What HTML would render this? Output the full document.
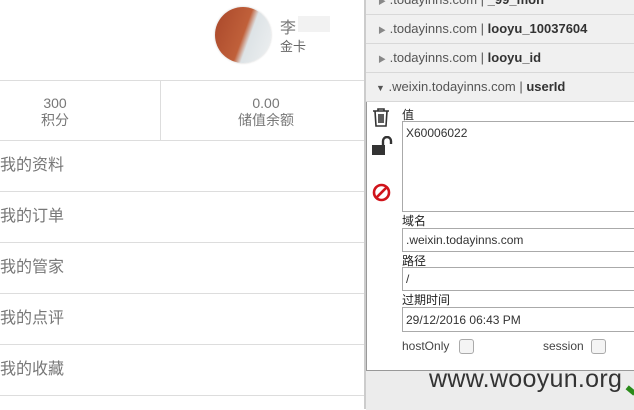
<!DOCTYPE html><html><head><style>
body{margin:0;width:634px;height:409px;overflow:hidden;position:relative;background:#fff;font-family:"Liberation Sans","Noto Sans CJK SC",sans-serif;}
.a{position:absolute}
.row{position:absolute;left:0;width:365px;height:50px;border-bottom:1px solid #ddd;font-size:16px;color:#777;line-height:50px}
.ck{position:absolute;left:366px;width:268px;height:28px;background:#f0f0f0;border-bottom:1px solid #d8d8d8;font-size:13px;color:#555;line-height:28px}
.ck b{color:#333}
.lbl{position:absolute;left:402px;font-size:12px;color:#222}
.box{position:absolute;left:402px;width:240px;border:1px solid #aaa;background:#fff;font-size:12px;color:#333;padding:0 0 0 3px;box-sizing:border-box}
</style></head><body>
<div class="a" style="left:0;top:0;width:365px;height:80px;border-bottom:1px solid #ddd"></div>
<div class="a" style="left:215px;top:7px;width:56px;height:56px;border-radius:50%;background:linear-gradient(110deg,#a9472a 0%,#c0603a 50%,#dde3e6 60%,#eef0f1 100%);box-shadow:0 0 2px #ccc"></div>
<div class="a" style="left:280px;top:14px;font-size:16px;color:#777">李</div>
<div class="a" style="left:298px;top:16px;width:32px;height:16px;background:#f2f2f2"></div>
<div class="a" style="left:280px;top:36px;font-size:13px;color:#666">金卡</div>
<div class="a" style="left:0;top:81px;width:365px;height:59px;border-bottom:1px solid #ddd"></div>
<div class="a" style="left:160px;top:81px;width:1px;height:59px;background:#ddd"></div>
<div class="a" style="left:0;top:95px;width:110px;text-align:center;font-size:14px;color:#777;line-height:17px">300<br>积分</div>
<div class="a" style="left:160px;top:95px;width:212px;text-align:center;font-size:14px;color:#777;line-height:17px">0.00<br>储值余额</div>
<div class="row" style="top:141px">我的资料</div>
<div class="row" style="top:192px">我的订单</div>
<div class="row" style="top:243px">我的管家</div>
<div class="row" style="top:294px">我的点评</div>
<div class="row" style="top:345px">我的收藏</div>
<div class="a" style="left:364px;top:0;width:2px;height:409px;background:#ccc"></div>
<div class="a" style="left:366px;top:0;width:268px;height:370px;background:#fff;border-left:1px solid #999"></div>
<div class="ck" style="top:-14px"><span style="margin-left:12px;font-size:8px;color:#888">▶</span> .todayinns.com | <b>_99_mon</b></div>
<div class="ck" style="top:15px"><span style="margin-left:12px;font-size:8px;color:#888">▶</span> .todayinns.com | <b>looyu_10037604</b></div>
<div class="ck" style="top:44px"><span style="margin-left:12px;font-size:8px;color:#888">▶</span> .todayinns.com | <b>looyu_id</b></div>
<div class="ck" style="top:73px"><span style="margin-left:10px;font-size:9px">▼</span> .weixin.todayinns.com | <b>userId</b></div>
<svg class="a" style="left:372px;top:107px" width="18" height="20" viewBox="0 0 18 20"><path d="M1 4h16M6 4V2h6v2M3 4l1 15h10l1-15M7 7v9M9 7v9M11 7v9" stroke="#333" stroke-width="1.6" fill="none"/></svg>
<svg class="a" style="left:371px;top:136px" width="22" height="20" viewBox="0 0 22 20"><rect x="1" y="9" width="13" height="10" fill="#333"/><path d="M12 9V5a4 4 0 0 1 8 0v3" stroke="#333" stroke-width="2.4" fill="none"/></svg>
<svg class="a" style="left:372px;top:183px" width="19" height="19" viewBox="0 0 19 19"><circle cx="9.5" cy="9.5" r="7.5" stroke="#d0141b" stroke-width="2.6" fill="none"/><path d="M4 15L15 4" stroke="#d0141b" stroke-width="2.6"/></svg>
<div class="lbl" style="top:106px">值</div>
<div class="box" style="top:121px;height:91px;line-height:22px">X60006022</div>
<div class="lbl" style="top:212px">域名</div>
<div class="box" style="top:228px;height:24px;line-height:22px">.weixin.todayinns.com</div>
<div class="lbl" style="top:252px">路径</div>
<div class="box" style="top:267px;height:24px;line-height:22px">/</div>
<div class="lbl" style="top:291px">过期时间</div>
<div class="box" style="top:307px;height:25px;line-height:24px">29/12/2016 06:43 PM</div>
<div class="a" style="left:402px;top:339px;font-size:12px;color:#444">hostOnly</div>
<div class="a" style="left:459px;top:339px;width:13px;height:13px;border:1px solid #aaa;border-radius:3px;background:#f4f4f4"></div>
<div class="a" style="left:543px;top:339px;font-size:12px;color:#444">session</div>
<div class="a" style="left:591px;top:339px;width:13px;height:13px;border:1px solid #aaa;border-radius:3px;background:#f4f4f4"></div>
<div class="a" style="left:366px;top:370px;width:268px;height:39px;background:#ececec;border-top:1px solid #999"></div>
<div class="a" style="left:429px;top:365px;font-size:25px;color:#333;letter-spacing:0.3px">www.wooyun.org</div>
<div class="a" style="left:626px;top:388px;width:10px;height:5px;background:#2a8a1a;transform:rotate(40deg)"></div>
</body></html>
